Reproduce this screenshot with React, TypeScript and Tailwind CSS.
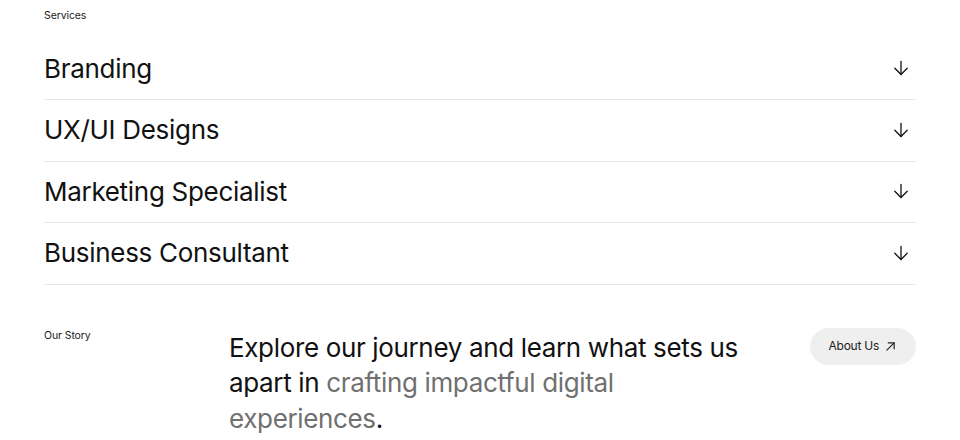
import React from "react";

const services = ["Branding", "UX/UI Designs", "Marketing Specialist", "Business Consultant"];

function ArrowDown() {
  return (
    <svg width="18" height="18" viewBox="0 0 18 18" fill="none" stroke="#111" strokeWidth="1.3" strokeLinecap="round" strokeLinejoin="round">
      <path d="M9 2.5v13" />
      <path d="M2.8 9.3l6.2 6.2 6.2-6.2" />
    </svg>
  );
}

function ArrowUpRight() {
  return (
    <svg width="11" height="11" viewBox="0 0 12 12" fill="none" stroke="#222" strokeWidth="1.3" strokeLinecap="round" strokeLinejoin="round">
      <path d="M2 10L10 2" />
      <path d="M3.5 2H10v6.5" />
    </svg>
  );
}

export default function App() {
  return (
    <div className="w-[960px] h-[440px] overflow-hidden bg-white px-[44px] text-[#111]" style={{ fontFamily: "Inter, 'Noto Sans', sans-serif" }}>
      <div className="pt-[9px] text-[10.5px] leading-[14px] tracking-[-0.1px] text-[#222]">Services</div>
      <div className="mt-[15.5px]">
        {services.map((s) => (
          <div key={s} className="flex h-[61.5px] items-center justify-between border-b border-[#e6e6e6]">
            <span className="text-[26px] tracking-[-0.3px] leading-none">{s}</span>
            <span className="mr-[6.5px] mt-[-1px]"><ArrowDown /></span>
          </div>
        ))}
      </div>
      <div className="mt-[43px] flex items-start">
        <div className="w-[185px] pt-[1px] text-[10.5px] leading-[14px] tracking-[-0.1px] text-[#222]">Our Story</div>
        <p className="w-[515px] pt-[2px] text-[26px] leading-[35.5px] tracking-[-0.35px]">
          Explore our journey and learn what sets us apart in{" "}
          <span className="text-[#707070]">crafting impactful digital experiences</span>.
        </p>
        <div className="ml-auto">
          <button className="flex h-[37px] items-center gap-[6px] rounded-full bg-[#efefef] pl-[19px] pr-[20px] text-[12px] tracking-[-0.25px] text-[#222]">
            About Us <ArrowUpRight />
          </button>
        </div>
      </div>
    </div>
  );
}
